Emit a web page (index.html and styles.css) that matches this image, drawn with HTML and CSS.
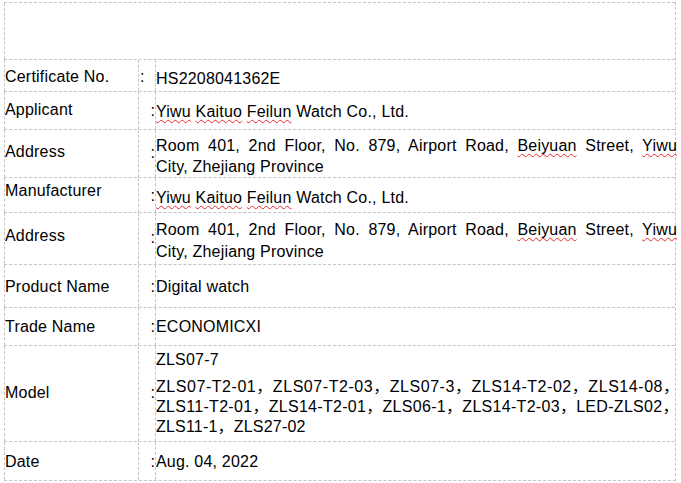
FILE: index.html
```html
<!DOCTYPE html>
<html lang="en">
<head>
<meta charset="utf-8">
<title>Certificate</title>
<link rel="stylesheet" href="styles.css">
</head>
<body>
<div class="sheet">
  <div class="row r0"><div class="cell blank"></div></div>

  <div class="row r1">
    <div class="cell lab">Certificate No.</div>
    <div class="cell col left">:</div>
    <div class="cell val">HS2208041362E</div>
  </div>

  <div class="row r2">
    <div class="cell lab">Applicant</div>
    <div class="cell col">:</div>
    <div class="cell val"><span class="sp">Yiwu</span> <span class="sp">Kaituo</span> <span class="sp">Feilun</span> Watch Co., Ltd.</div>
  </div>

  <div class="row r3">
    <div class="cell lab">Address</div>
    <div class="cell col">:</div>
    <div class="cell val">
      <span class="jline">Room 401, 2nd Floor, No. 879, Airport Road, <span class="sp">Beiyuan</span> Street, <span class="sp">Yiwu</span></span>
      <span class="line">City, Zhejiang Province</span>
    </div>
  </div>

  <div class="row r4">
    <div class="cell lab">Manufacturer</div>
    <div class="cell col">:</div>
    <div class="cell val"><span class="sp">Yiwu</span> <span class="sp">Kaituo</span> <span class="sp">Feilun</span> Watch Co., Ltd.</div>
  </div>

  <div class="row r5">
    <div class="cell lab">Address</div>
    <div class="cell col">:</div>
    <div class="cell val">
      <span class="jline">Room 401, 2nd Floor, No. 879, Airport Road, <span class="sp">Beiyuan</span> Street, <span class="sp">Yiwu</span></span>
      <span class="line">City, Zhejiang Province</span>
    </div>
  </div>

  <div class="row r6">
    <div class="cell lab">Product Name</div>
    <div class="cell col">:</div>
    <div class="cell val">Digital watch</div>
  </div>

  <div class="row r7">
    <div class="cell lab">Trade Name</div>
    <div class="cell col">:</div>
    <div class="cell val">ECONOMICXI</div>
  </div>

  <div class="row r8">
    <div class="cell lab">Model</div>
    <div class="cell col">:</div>
    <div class="cell val">
      <span class="line first">ZLS07-7</span>
      <span class="line m2">ZLS07-T2-01，ZLS07-T2-03，ZLS07-3，ZLS14-T2-02，ZLS14-08，</span>
      <span class="line m3">ZLS11-T2-01，ZLS14-T2-01，ZLS06-1，ZLS14-T2-03，LED-ZLS02，</span>
      <span class="line">ZLS11-1，ZLS27-02</span>
    </div>
  </div>

  <div class="row r9">
    <div class="cell lab">Date</div>
    <div class="cell col">:</div>
    <div class="cell val">Aug. 04, 2022</div>
  </div>
</div>
</body>
</html>
```

FILE: styles.css
```css
html, body {
  margin: 0;
  padding: 0;
  background: #ffffff;
}

body {
  font-family: "Liberation Sans", Arial, "Noto Sans CJK SC", sans-serif;
  font-size: 16px;
  line-height: 20px;
  color: #000000;
  letter-spacing: 0.2px;
}

.sheet {
  box-sizing: border-box;
  width: 672px;
  margin: 2px 0 0 4px;
  border-right: 1px dashed #c4c4c4;
  border-bottom: 1px dashed #c4c4c4;
}

.row {
  box-sizing: border-box;
  display: grid;
  grid-template-columns: 134px 17px 1fr;
  border-top: 1px dashed #c4c4c4;
  height: var(--h);
}

.cell {
  border-left: 1px dashed #c4c4c4;
  white-space: nowrap;
}

.blank {
  grid-column: 1 / -1;
}

.lab {
  padding-top: var(--lt);
}

.col {
  padding-top: var(--ct);
  text-align: right;
  letter-spacing: 0;
}

.col.left {
  text-align: left;
  padding-left: 1px;
}

.val {
  padding-top: var(--vt);
  line-height: var(--lh, 20px);
}

.line {
  display: block;
}

.jline {
  display: block;
  margin-right: -2px;
  text-align: justify;
  text-align-last: justify;
  white-space: normal;
}

.sp {
  text-decoration: underline wavy #e8282d;
  text-decoration-thickness: 1px;
  text-underline-offset: 2px;
  text-decoration-skip-ink: none;
}

.first {
  margin-bottom: 7px;
}

.m2 {
  letter-spacing: 0.55px;
}

.m3 {
  letter-spacing: 0.3px;
}

.r0 { --h: 57px; }
.r1 { --h: 32px; --lt: 7px;  --ct: 7px;  --vt: 9px; }
.r2 { --h: 38px; --lt: 8px;  --ct: 9px;  --vt: 10px; }
.r3 { --h: 48px; --lt: 12px; --ct: 13px; --vt: 5px;  --lh: 21px; }
.r4 { --h: 35px; --lt: 3px;  --ct: 8px;  --vt: 10px; }
.r5 { --h: 52px; --lt: 13px; --ct: 15px; --vt: 6px;  --lh: 22px; }
.r6 { --h: 43px; --lt: 12px; --ct: 12px; --vt: 12px; }
.r7 { --h: 38px; --lt: 9px;  --ct: 9px;  --vt: 9px; }
.r8 { --h: 96px; --lt: 37px; --ct: 37px; --vt: 4px; }
.r9 { --h: 39px; --lt: 10px; --ct: 10px; --vt: 10px; }
```
